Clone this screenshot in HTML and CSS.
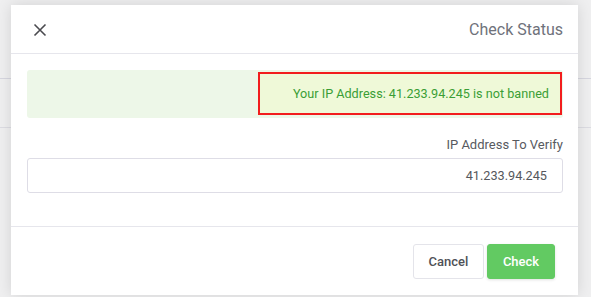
FILE: index.html
```html
<!DOCTYPE html>
<html lang="en">

<head>
    <meta charset="UTF-8" />
    <meta name="viewport" content="width=device-width, initial-scale=1.0" />
    <title>Check Status</title>
    <link rel="stylesheet" href="styles.css">
</head>

<body>
    <div class="page">
        <div class="page-header"></div>
        <div class="page-toolbar"></div>
    </div>

    <div class="modal">
        <div class="modal-header">
            <button class="close" type="button" aria-label="Close">
                <svg width="14" height="14" viewBox="0 0 14 14">
                    <path d="M1.5 1.5 L12.5 12.5 M12.5 1.5 L1.5 12.5" stroke="#4a4a4f" stroke-width="1.6" fill="none" />
                </svg>
            </button>
            <h4 class="modal-title">Check Status</h4>
        </div>

        <div class="modal-body">
            <div class="alert">
                <span class="alert-text">Your IP Address: 41.233.94.245 is not banned</span>
            </div>

            <div class="form-group">
                <label for="ip">IP Address To Verify</label>
                <input id="ip" type="text" value="41.233.94.245">
            </div>
        </div>

        <div class="modal-footer">
            <button class="btn btn-default" type="button">Cancel</button>
            <button class="btn btn-success" type="button">Check</button>
        </div>
    </div>
</body>

</html>
```

FILE: styles.css
```css
body {
    margin: 0;
    padding: 0;
    font-family: Roboto, "Liberation Sans", sans-serif;
    background: #efeff0;
    height: 297px;
    overflow: hidden;
}

.page-header {
    height: 78px;
    border-bottom: 1px solid #d6d6df;
}

.page-toolbar {
    height: 48px;
    border-bottom: 1px solid #dcdce2;
}

.modal {
    position: absolute;
    left: 11px;
    top: 5px;
    width: 567px;
    height: 290px;
    background: #fff;
    box-shadow: 0 0 14px rgba(0, 0, 0, 0.12);
    display: flex;
    flex-direction: column;
}

.modal-header {
    height: 48px;
    display: flex;
    align-items: center;
    justify-content: space-between;
    padding: 0 15px 0 20px;
    border-bottom: 1px solid #e6e6ec;
}

.close {
    border: none;
    background: none;
    padding: 0;
    width: 18px;
    height: 18px;
    display: flex;
    align-items: center;
    justify-content: center;
    margin-top: 1px;
}

.modal-title {
    margin: 0;
    font-size: 16px;
    font-weight: 400;
    color: #6f727b;
}

.modal-body {
    padding: 16px 15px 0 16px;
}

.alert {
    height: 48px;
    background: #edf7e8;
    border-radius: 3px;
    display: flex;
    align-items: center;
    justify-content: flex-end;
}

.alert-text {
    box-sizing: border-box;
    height: 43px;
    width: 304px;
    margin-right: 1px;
    margin-top: -1px;
    display: flex;
    align-items: center;
    justify-content: flex-end;
    padding: 0 11px;
    border: 2px solid #f21d1d;
    background: #eff9d8;
    color: #3a9e35;
    font-size: 12.65px;
}

.form-group {
    margin-top: 17px;
    display: flex;
    flex-direction: column;
}

label {
    text-align: right;
    font-size: 13px;
    line-height: 20px;
    color: #585a60;
    margin-bottom: 3px;
}

input {
    box-sizing: border-box;
    height: 35px;
    border: 1px solid #dedde6;
    border-radius: 3px;
    padding: 0 15px;
    text-align: right;
    font-family: Roboto, "Liberation Sans", sans-serif;
    font-size: 12.7px;
    color: #55575c;
}

.modal-footer {
    margin-top: auto;
    height: 68px;
    border-top: 1px solid #e6e6ec;
    display: flex;
    align-items: center;
    justify-content: flex-end;
    gap: 3px;
    padding: 0 23px;
}

.btn {
    height: 35px;
    border-radius: 3px;
    font-family: Roboto, "Liberation Sans", sans-serif;
    font-size: 13px;
    font-weight: 500;
    padding: 0;
}

.btn-default {
    width: 71px;
    background: #fff;
    border: 1px solid #e4e4ea;
    color: #4f5157;
}

.btn-success {
    width: 68px;
    background: #62ca62;
    border: 1px solid #62ca62;
    color: #fff;
    box-shadow: 0 1px 3px rgba(0, 0, 0, 0.12);
}
```
